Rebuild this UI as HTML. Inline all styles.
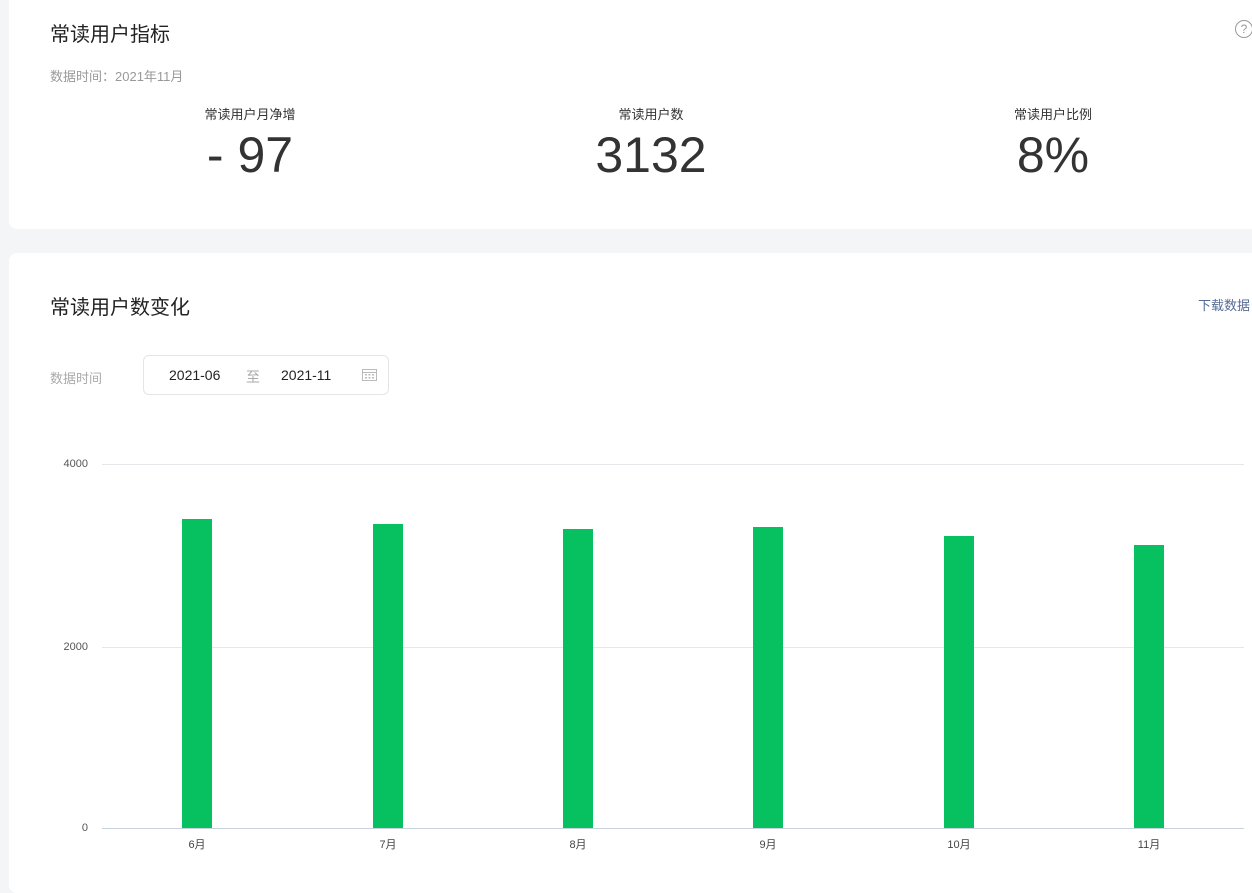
<!DOCTYPE html>
<html><head><meta charset="utf-8"><style>
body{margin:0;width:1252px;height:861px;background:#f4f5f7;font-family:"Liberation Sans","Noto Sans CJK SC",sans-serif;position:relative;overflow:hidden}
.c{position:absolute;background:#fff;border-radius:8px}
.t{position:absolute;white-space:nowrap}
.bar{position:absolute;width:30px;background:#07c160;bottom:33px}
.yl{position:absolute;left:40px;width:48px;text-align:right;font-size:11px;color:#555}
.gl{position:absolute;left:102px;width:1142px;height:1px;background:#e5e7eb}
.xl{position:absolute;top:836px;font-size:11px;color:#444;width:40px;text-align:center}
</style></head><body>
<div class="c" style="left:9px;top:-10px;width:1260px;height:239px"></div>
<div class="c" style="left:9px;top:253px;width:1260px;height:640px"></div>
<div class="t" style="left:50px;top:18px;font-size:20px;color:#222">常读用户指标</div>
<div class="t" style="left:50px;top:66px;font-size:13px;color:#999">数据时间：2021年11月</div>
<div style="position:absolute;left:1235px;top:20px;width:16px;height:16px;border:1px solid #999;border-radius:50%;font-size:12px;color:#999;text-align:center;line-height:16px">?</div>
<div class="t" style="left:150px;width:200px;text-align:center;top:104px;font-size:13px;color:#333">常读用户月净增</div>
<div class="t" style="left:150px;width:200px;text-align:center;top:126px;font-size:50px;color:#333">- 97</div>
<div class="t" style="left:551px;width:200px;text-align:center;top:104px;font-size:13px;color:#333">常读用户数</div>
<div class="t" style="left:551px;width:200px;text-align:center;top:126px;font-size:50px;color:#333">3132</div>
<div class="t" style="left:953px;width:200px;text-align:center;top:104px;font-size:13px;color:#333">常读用户比例</div>
<div class="t" style="left:953px;width:200px;text-align:center;top:126px;font-size:50px;color:#333">8%</div>
<div class="t" style="left:50px;top:291px;font-size:20px;color:#222">常读用户数变化</div>
<div class="t" style="left:1198px;top:295px;font-size:13px;color:#576b95">下载数据</div>
<div class="t" style="left:50px;top:368px;font-size:13px;color:#aaa">数据时间</div>
<div style="position:absolute;left:143px;top:355px;width:244px;height:38px;border:1px solid #e3e5e8;border-radius:6px"></div>
<div class="t" style="left:169px;top:367px;font-size:14px;color:#222">2021-06</div>
<div class="t" style="left:246px;top:367px;font-size:14px;color:#aaa">至</div>
<div class="t" style="left:281px;top:367px;font-size:14px;color:#222">2021-11</div>
<svg style="position:absolute;left:362px;top:368px" width="15" height="13"><rect x="0.5" y="1.5" width="14" height="11" fill="none" stroke="#bbb"/><line x1="0" y1="4.5" x2="15" y2="4.5" stroke="#bbb"/><g fill="#bbb"><rect x="3" y="6" width="2" height="1.5"/><rect x="6.5" y="6" width="2" height="1.5"/><rect x="10" y="6" width="2" height="1.5"/><rect x="3" y="9" width="2" height="1.5"/><rect x="6.5" y="9" width="2" height="1.5"/><rect x="10" y="9" width="2" height="1.5"/></g></svg>
<div class="gl" style="top:464px"></div>
<div class="gl" style="top:647px"></div>
<div class="gl" style="top:828px;background:#c9d3df"></div>
<div class="yl" style="top:458px">4000</div>
<div class="yl" style="top:641px">2000</div>
<div class="yl" style="top:822px">0</div>
<div class="bar" style="left:182px;top:519px"></div>
<div class="bar" style="left:373px;top:524px"></div>
<div class="bar" style="left:563px;top:529px"></div>
<div class="bar" style="left:753px;top:527px"></div>
<div class="bar" style="left:944px;top:536px"></div>
<div class="bar" style="left:1134px;top:545px"></div>
<div class="xl" style="left:177px">6月</div>
<div class="xl" style="left:368px">7月</div>
<div class="xl" style="left:558px">8月</div>
<div class="xl" style="left:748px">9月</div>
<div class="xl" style="left:939px">10月</div>
<div class="xl" style="left:1129px">11月</div>
</body></html>
